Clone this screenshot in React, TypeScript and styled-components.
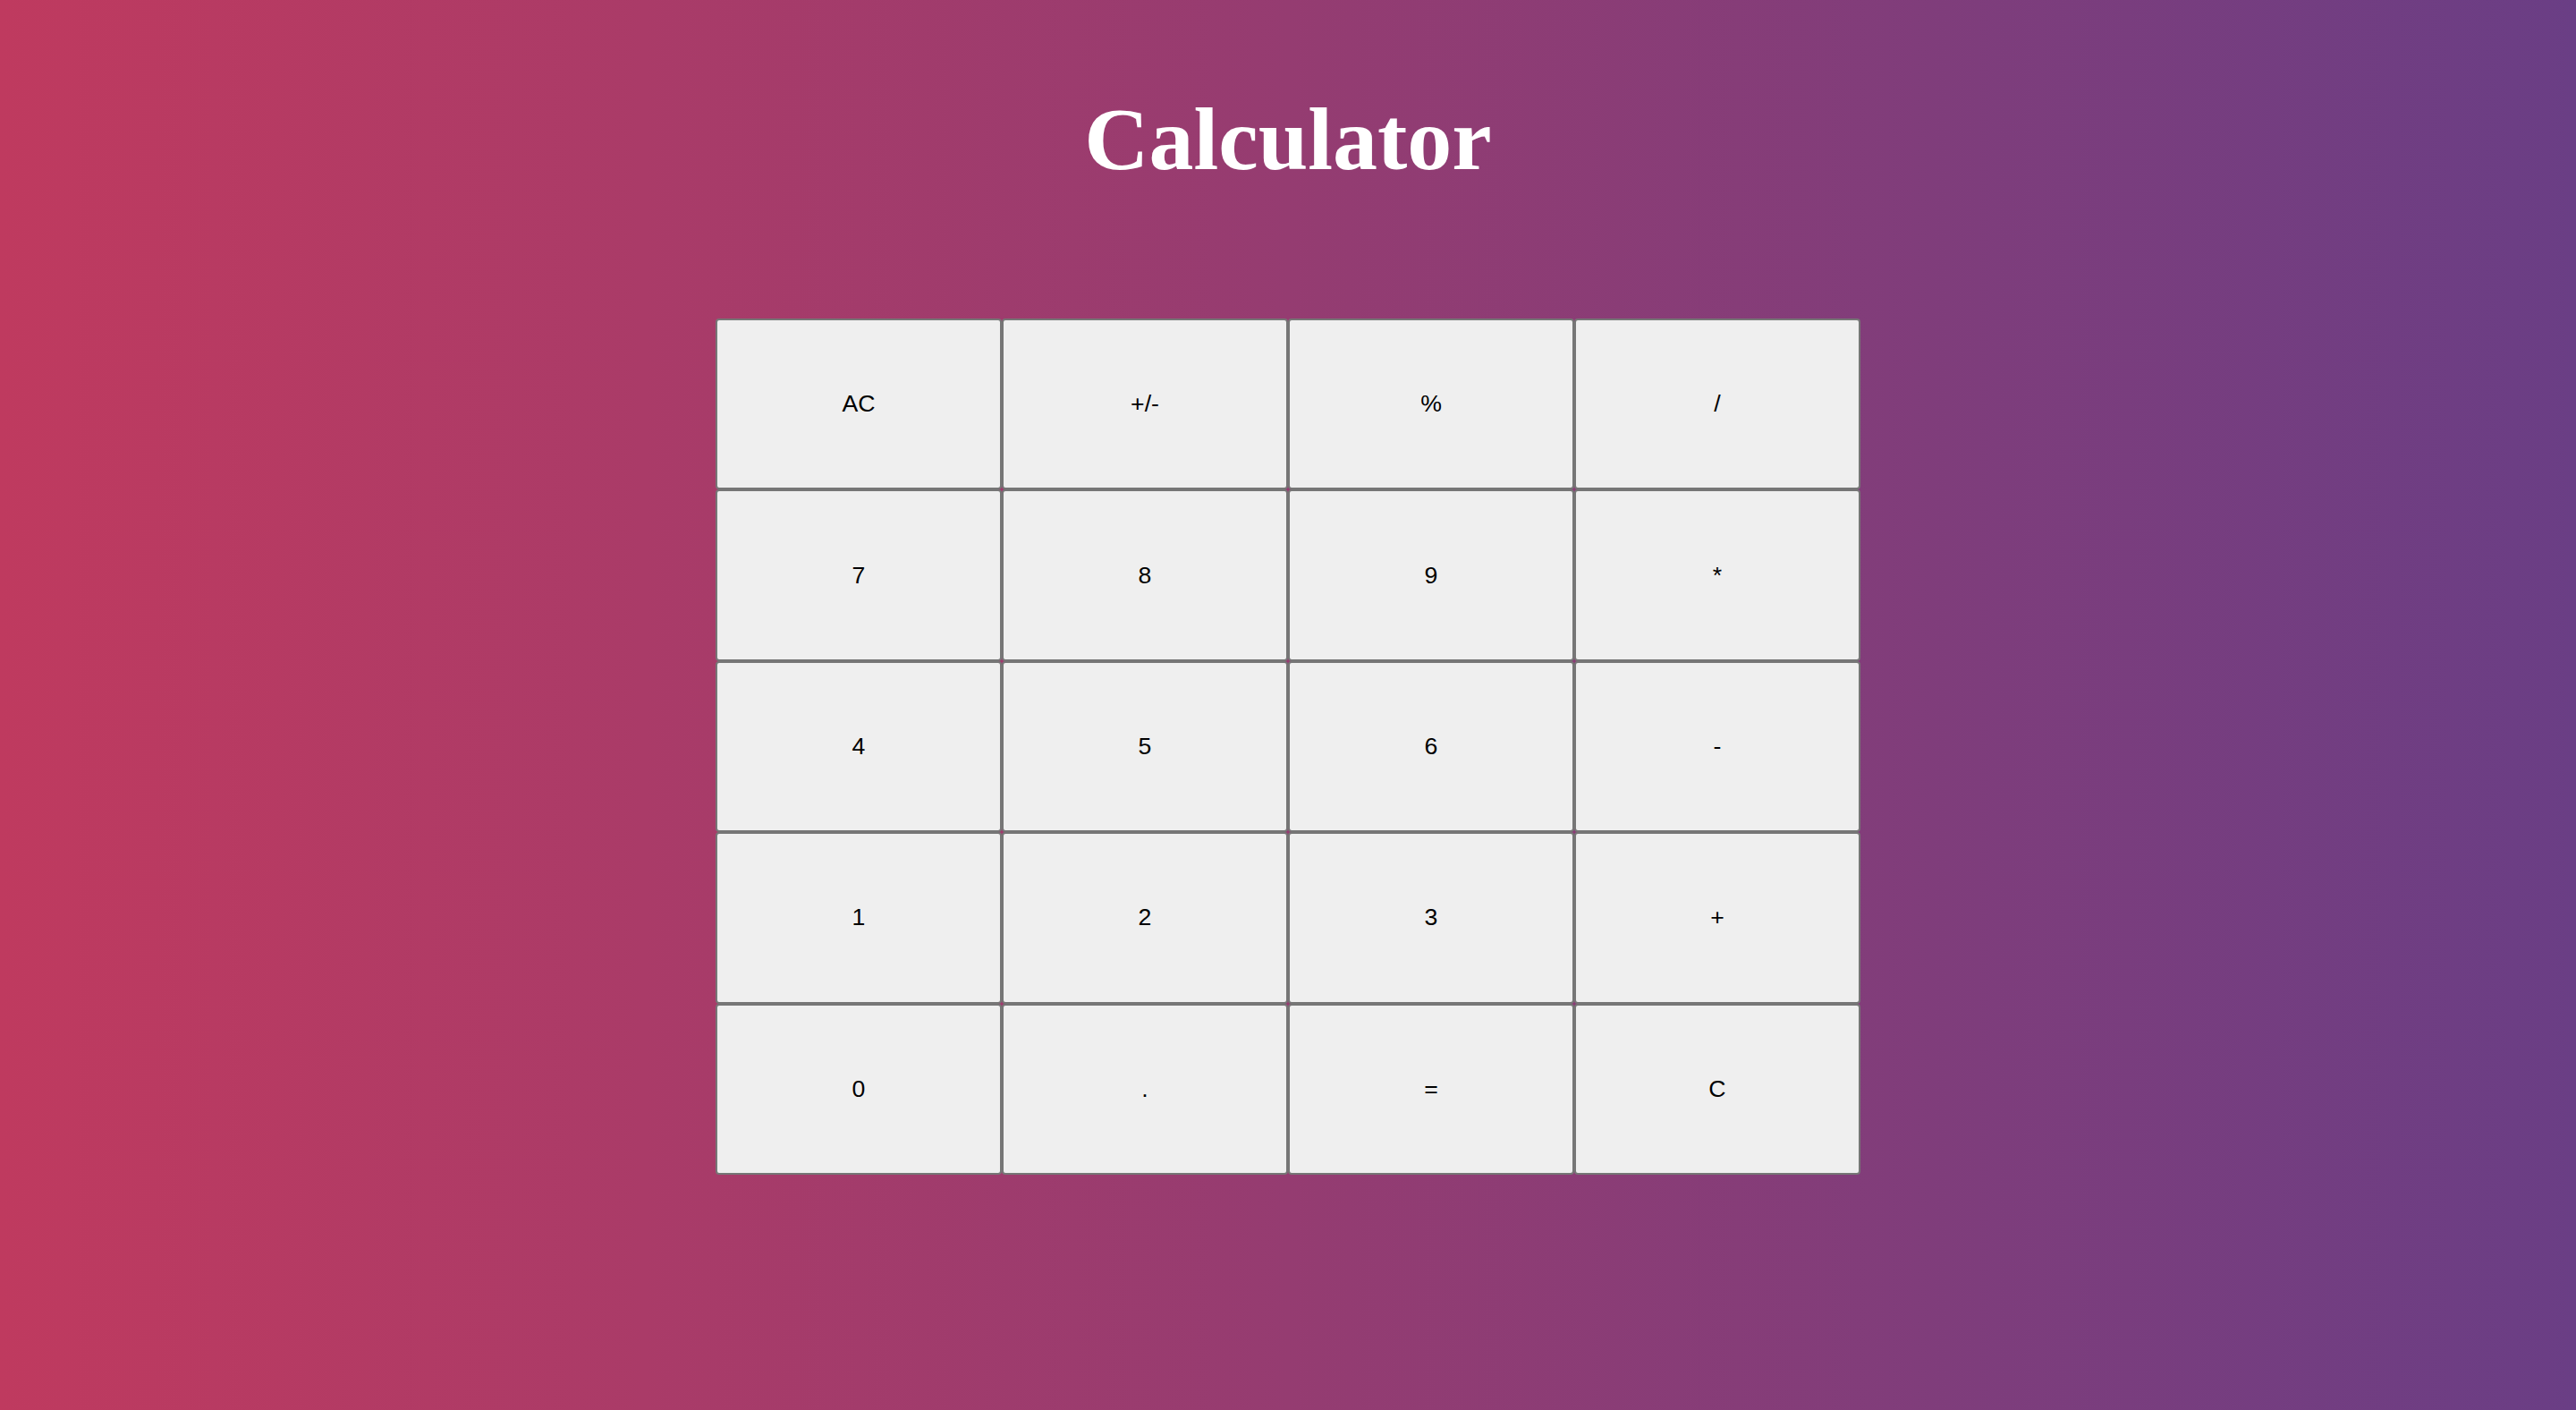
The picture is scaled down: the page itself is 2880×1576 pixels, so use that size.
import styled, {createGlobalStyle} from "styled-components";

const keys = [
    "AC", "+/-", "%", "/",
    "7", "8", "9", "*",
    "4", "5", "6", "-",
    "1", "2", "3", "+",
    "0", ".", "=", "C",
];

export default function App() {
    return <>
        <GlobalStyle/>
        <StyledPage>
            <StyledTitle>Calculator</StyledTitle>
            <StyledKeypad>
                {keys.map(key => <StyledKey key={key}>{key}</StyledKey>)}
            </StyledKeypad>
        </StyledPage>
    </>
}

const GlobalStyle = createGlobalStyle`
  html, body {
    margin: 0;
    padding: 0;
  }
`

const StyledPage = styled.main`
  min-height: 1576px;
  box-sizing: border-box;
  padding-top: 98px;
  display: flex;
  flex-direction: column;
  align-items: center;
  background: linear-gradient(to right, #bf3a5f, #953c71 50%, #6a3e85);
`

const StyledTitle = styled.h1`
  margin: 0 0 143px 0;
  font-family: "Liberation Serif", "Times New Roman", serif;
  font-weight: 700;
  font-size: 100px;
  line-height: 115px;
  color: #ffffff;
`

const StyledKeypad = styled.div`
  width: 1280px;
  height: 957px;
  display: grid;
  grid-template-columns: repeat(4, 1fr);
  grid-template-rows: repeat(5, 1fr);
`

const StyledKey = styled.button`
  box-sizing: border-box;
  margin: 0;
  padding: 0;
  background: #efefef;
  border: 2px solid #767676;
  border-radius: 4px;
  font-family: "Liberation Sans", Arial, sans-serif;
  font-size: 26.67px;
  color: #000000;
  cursor: pointer;
`
